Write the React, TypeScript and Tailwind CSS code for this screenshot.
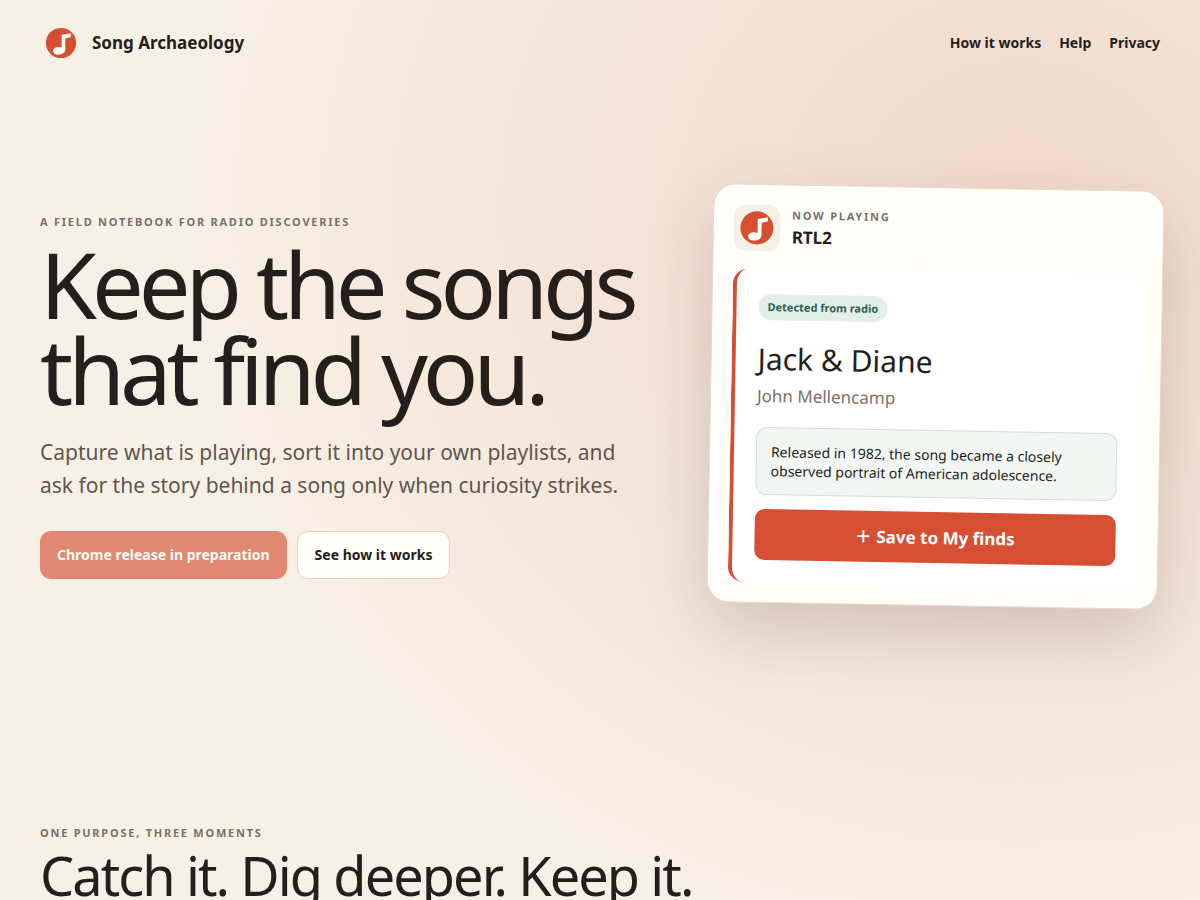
const eyebrow = "text-[11px] leading-4 font-bold tracking-[0.16em] uppercase text-[#7a7168]";

function LogoMark({ className }: { className: string }) {
  return (
    <svg viewBox="0 0 128 128" className={className} aria-hidden="true">
      <circle cx="64" cy="64" r="46" fill="#d64f32" />
      <path d="M66 39 L94 34 V46 L77 50 V84 C77 94 67 99.500 55 99.500 C46 99.500 40 95 40 88 C40 80 48 76 57 76 C61 76 64 77 66 78 Z" fill="#fffdf8" />
    </svg>
  );
}

function Header() {
  return (
    <header className="flex items-center justify-between py-[22px]">
      <a href="#top" className="flex items-center gap-[10px] text-[17px] font-bold">
        <LogoMark className="size-[42px]" />
        Song Archaeology
      </a>
      <nav className="flex gap-[18px] text-sm font-bold">
        <a href="#how">How it works</a>
        <a href="#help">Help</a>
        <a href="#privacy">Privacy</a>
      </nav>
    </header>
  );
}

function PlayerCard() {
  return (
    <article className="rotate-1 rounded-[22px] border border-[#e3d9cd] bg-[#fffef9] p-5 shadow-[0_28px_70px_rgba(60,36,30,0.18)]">
      <div className="flex items-center gap-3">
        <span className="grid size-[46px] place-items-center rounded-[11px] bg-[#f6efe6]">
          <LogoMark className="size-[46px]" />
        </span>
        <div>
          <p className={eyebrow}>Now playing</p>
          <p className="mt-0.5 text-[17px] leading-6 font-bold">RTL2</p>
        </div>
      </div>
      <div className="mt-[18px] rounded-[15px] border-l-4 border-[#d64f32] bg-white p-[22px]">
        <span className="mt-[3px] inline-block rounded-full bg-[#e3eee8] px-[9px] py-[5px] text-[11px] leading-4 font-bold text-[#2e604f]">
          Detected from radio
        </span>
        <h2 className="mt-[18px] text-[30px] leading-[42px]">Jack &amp; Diane</h2>
        <p className="mt-1 text-[17px] leading-6 text-[#7a7168]">John Mellencamp</p>
        <p className="mt-[19px] rounded-[11px] border border-[#cfdfd9] bg-[#f2f7f4] p-[14px] text-sm leading-[19px]">
          Released in 1982, the song became a closely observed portrait of American adolescence.
        </p>
        <button type="button" className="mt-[14px] h-[51px] w-full rounded-[10px] bg-[#d64f32] text-[17px] font-bold text-white">
          ＋ Save to My finds
        </button>
      </div>
    </article>
  );
}

export default function App() {
  return (
    <div
      id="top"
      className="min-h-screen overflow-hidden bg-[#f7f0e6] bg-[radial-gradient(ellipse_860px_780px_at_85%_210px,#f2d9cc_0,transparent_100%)] px-10 font-['Noto_Sans','Noto_Sans_CJK_SC',sans-serif] text-[#241f1b]"
    >
      <Header />
      <main>
        <section className="grid min-h-[620px] grid-cols-[1.15fr_0.85fr] items-center gap-[60px]">
          <div>
            <p className={eyebrow}>A field notebook for radio discoveries</p>
            <h1 className="mt-[11px] text-[92px] leading-[86px] tracking-[-0.055em]">
              Keep the songs that find you.
            </h1>
            <p className="mt-[23px] text-[21px] leading-[33px] text-[#5f564f]">
              Capture what is playing, sort it into your own playlists, and ask for the story behind a song only when curiosity strikes.
            </p>
            <div className="mt-[29px] flex gap-[10px] text-sm font-bold">
              <button type="button" disabled className="h-12 rounded-[11px] bg-[#e08871] px-[17px] text-[#fffaf3]">
                Chrome release in preparation
              </button>
              <a href="#how" className="flex h-12 items-center rounded-[11px] border border-[#ded4c8] bg-[#fffef9] px-[17px]">
                See how it works
              </a>
            </div>
          </div>
          <PlayerCard />
        </section>
        <section id="how" className="pt-[119px] pb-20">
          <p className={eyebrow}>One purpose, three moments</p>
          <h2 className="mt-[3px] text-[54px] leading-[62px] tracking-[-0.035em]">Catch it. Dig deeper. Keep it.</h2>
        </section>
      </main>
    </div>
  );
}
